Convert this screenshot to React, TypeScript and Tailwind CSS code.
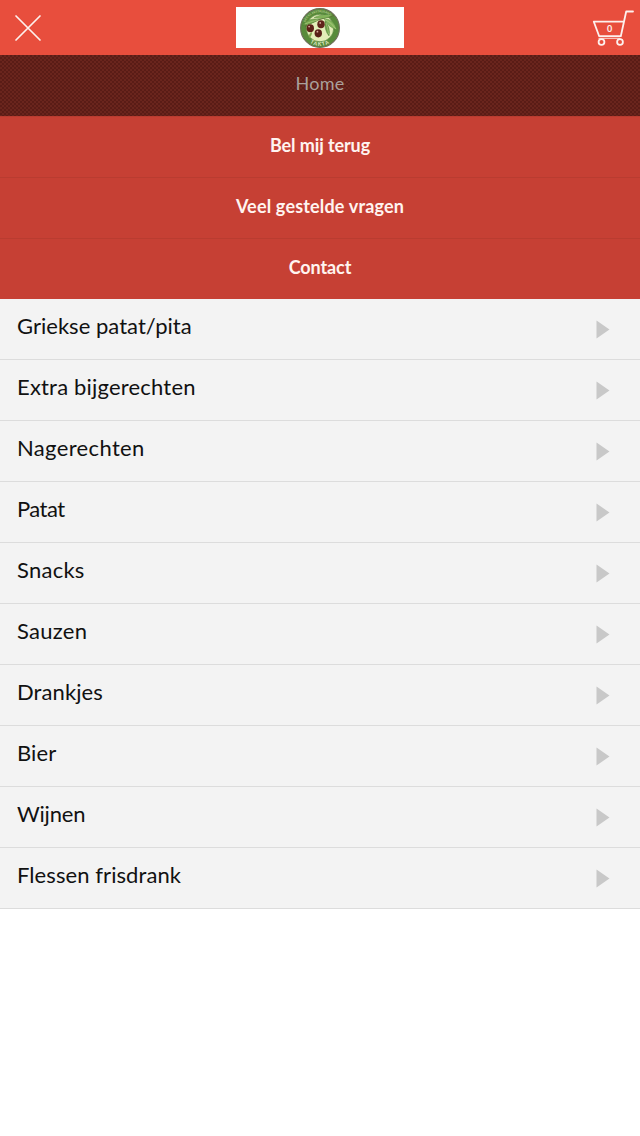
const menuItems = [
  { label: "Bel mij terug", tracking: "tracking-[-0.1px]" },
  { label: "Veel gestelde vragen", tracking: "tracking-[0.17px]" },
  { label: "Contact", tracking: "tracking-[-0.1px]" },
];

const categories = [
  { label: "Griekse patat/pita", tracking: "tracking-[0.03px]" },
  { label: "Extra bijgerechten", tracking: "tracking-[0.19px]" },
  { label: "Nagerechten", tracking: "tracking-[0.35px]" },
  { label: "Patat", tracking: "tracking-[-0.55px]" },
  { label: "Snacks", tracking: "tracking-[0.25px]" },
  { label: "Sauzen", tracking: "tracking-[0.28px]" },
  { label: "Drankjes", tracking: "tracking-[0.1px]" },
  { label: "Bier", tracking: "tracking-[0.1px]" },
  { label: "Wijnen", tracking: "tracking-[-0.2px]" },
  { label: "Flessen frisdrank", tracking: "tracking-[0.08px]" },
];

function CloseIcon() {
  return (
    <svg width="28" height="28" viewBox="0 0 28 28" fill="none" stroke="#fdf1ee" strokeWidth="1.7" strokeLinecap="round">
      <path d="M2 2 26 26M26 2 2 26" />
    </svg>
  );
}

function CartIcon() {
  return (
    <svg width="42" height="38" viewBox="0 0 42 38" fill="none" stroke="#fdf1ee" strokeWidth="1.8" strokeLinecap="round" strokeLinejoin="round">
      <path d="M41 2.5H34.2L28.8 27.2H7.2L1.8 12.7H31.6" />
      <path d="M7 29.3H28" strokeWidth="1.3" opacity="0.7" />
      <circle cx="9.5" cy="33" r="2.9" />
      <circle cx="28" cy="33" r="2.9" />
      <text x="17.6" y="23.3" textAnchor="middle" fontSize="9" fontWeight="700" fill="#fdf1ee" stroke="none" fontFamily="Lato, sans-serif">
        0
      </text>
    </svg>
  );
}

function Logo() {
  return (
    <svg width="40" height="40" viewBox="0 0 40 40">
      <defs>
        <path id="logo-top" d="M4.2 20A15.8 15.8 0 0 1 35.8 20" />
        <path id="logo-bottom" d="M2.2 20A17.8 17.8 0 0 0 37.8 20" />
      </defs>
      <circle cx="20" cy="20" r="19.4" fill="#588b3b" stroke="#6f705b" strokeWidth="1.1" />
      <circle cx="20" cy="20" r="13.8" fill="#e3edb8" stroke="#47782e" strokeWidth="0.6" />
      {/* Branch and leaves */}
      <path d="M5 18.5Q17 11 34 7.5" stroke="#5e6b31" strokeWidth="1" fill="none" />
      <path d="M2.5 17Q9 9 19 11.5Q11 17 2.5 17Z" fill="#76a64e" stroke="#4b7c38" strokeWidth="0.4" />
      <path d="M14 9.5Q23 5 33 7Q24 12.5 14 9.5Z" fill="#82b35a" stroke="#4b7c38" strokeWidth="0.4" />
      <path d="M24 10.5Q34 11 37 22Q28 19 24 10.5Z" fill="#82b35a" stroke="#4b7c38" strokeWidth="0.4" />
      <path d="M25 13Q31 20 29 28Q24 22 25 13Z" fill="#6ba048" stroke="#4b7c38" strokeWidth="0.4" />
      <path d="M25 11.5Q31 14 36 21M26 15Q28 20 28.5 26M5 16Q12 13 18 12" stroke="#c6d895" strokeWidth="0.5" fill="none" />
      <path d="M12 24Q12 28 9 30Q8 26 12 24Z" fill="#80a64e" />
      {/* Olives */}
      <ellipse cx="10.3" cy="20.3" rx="3.7" ry="4" fill="#5c2017" />
      <ellipse cx="21" cy="16.3" rx="3.7" ry="4" fill="#60231a" />
      <ellipse cx="18.3" cy="25.3" rx="3.7" ry="4.1" fill="#592018" />
      <circle cx="9.1" cy="18.6" r="0.9" fill="#d9aba0" />
      <circle cx="20.2" cy="14.9" r="0.9" fill="#d9aba0" />
      <circle cx="17.4" cy="23.7" r="0.9" fill="#d9aba0" />
      <text fontSize="3" fill="#cbdba4" fontFamily="Lato, sans-serif" textAnchor="middle">
        <textPath href="#logo-top" startOffset="42%">GRIEKS RESTAURANT</textPath>
      </text>
      <text fontSize="5.2" fontWeight="700" fill="#e1ebc9" fontFamily="Lato, sans-serif" textAnchor="middle" letterSpacing="1">
        <textPath href="#logo-bottom" startOffset="50%">TAKTA</textPath>
      </text>
    </svg>
  );
}

export default function App() {
  return (
    <main className="min-h-screen w-full bg-white font-[Lato,'Noto_Sans',sans-serif]">
      {/* Header */}
      <header className="flex h-[55px] items-start justify-between bg-[#e84e3d]">
        <button className="w-[168px] pt-3.5 pl-3.5" aria-label="Menu sluiten">
          <CloseIcon />
        </button>
        <div className="mt-[7px] flex h-[41px] w-[168px] items-center justify-center bg-white">
          <Logo />
        </div>
        <button className="flex w-[168px] justify-end pt-[9px] pr-1.5" aria-label="Winkelwagen">
          <CartIcon />
        </button>
      </header>

      {/* Menu */}
      <nav className="text-center text-[18px]">
        <a className="block h-[61px] bg-[#672119] bg-[repeating-conic-gradient(#5a1c16_0_25%,#6a251d_0_50%)] bg-[length:4px_4px] leading-[57px] tracking-[0.3px] text-[#aaa19c]">
          Home
        </a>
        {menuItems.map((item) => (
          <a
            key={item.label}
            className={`block h-[61px] border-t border-[#b93c30] bg-[#c64034] leading-[56px] font-bold text-[#fff4f0] first-of-type:border-[#c64034] ${item.tracking}`}
          >
            {item.label}
          </a>
        ))}
      </nav>

      {/* Categories */}
      <ul className="bg-[#f3f3f3]">
        {categories.map((category) => (
          <li key={category.label} className="flex h-[61px] items-start justify-between border-b border-[#dcdcdc] pr-[30px] pl-[17px]">
            <span className={`text-[22px] leading-[54px] text-[#111] ${category.tracking}`}>{category.label}</span>
            <svg className="mt-[21px]" width="14" height="19" viewBox="0 0 14 19">
              <path d="M0.5 0.5V18.5L13.5 9.5Z" fill="#c8c8c8" />
            </svg>
          </li>
        ))}
      </ul>
    </main>
  );
}
